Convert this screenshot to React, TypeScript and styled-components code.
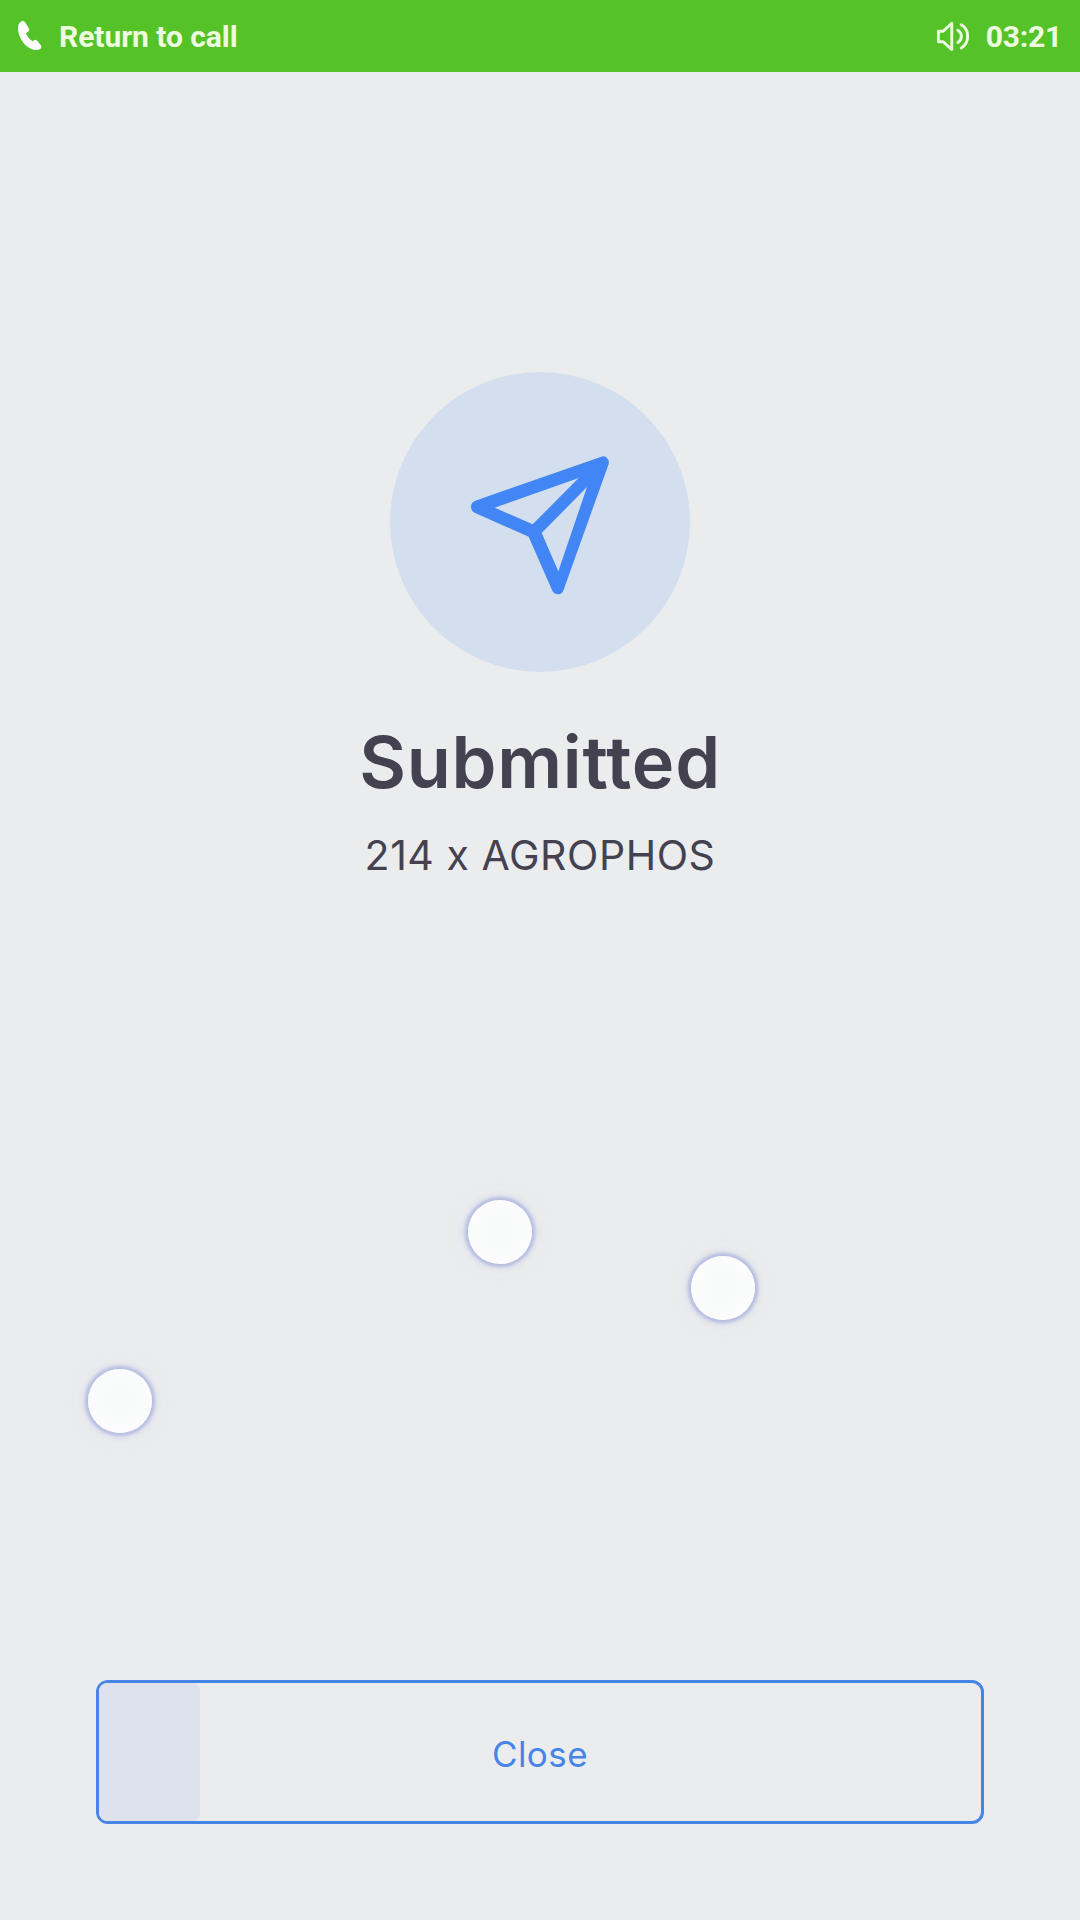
import React from "react";
import styled, { createGlobalStyle } from "styled-components";

const GlobalStyle = createGlobalStyle`
  * { box-sizing: border-box; }
  html, body { margin: 0; background: #ebecee; }
`;

const Screen = styled.main`
  position: relative;
  display: flex;
  flex-direction: column;
  width: 1080px;
  height: 1920px;
  overflow: hidden;
  background: #ebecee;
  font-family: Inter, "Liberation Sans", sans-serif;
  color: #444250;
`;

const CallBar = styled.header`
  display: flex;
  align-items: center;
  height: 72px;
  padding: 0 18px 0 17px;
  background: #55c327;
  color: #edfce0;
  font: 700 30px/36px Roboto, sans-serif;
`;

const CallLabel = styled.span`
  flex: 1;
  margin-left: 16px;
  padding-top: 1px;
  letter-spacing: -0.05px;
`;

const CallTime = styled.time`
  margin-left: 15px;
  padding-top: 1px;
  letter-spacing: -0.2px;
`;

const Result = styled.section`
  display: flex;
  flex: 1;
  flex-direction: column;
  align-items: center;
  padding-top: 300px;
`;

const Badge = styled.div`
  display: flex;
  align-items: center;
  justify-content: center;
  width: 300px;
  height: 300px;
  border-radius: 50%;
  background: #d3dfee;
`;

const Title = styled.h1`
  margin: 46px 0 0;
  font-size: 72px;
  line-height: 88px;
  font-weight: 600;
  letter-spacing: 0.75px;
`;

const Summary = styled.p`
  margin: 25px 0 0;
  font-size: 41px;
  line-height: 48px;
  font-weight: 400;
  letter-spacing: 0.55px;
`;

const Footer = styled.footer`
  display: flex;
  padding: 0 96px 96px;
`;

const CloseButton = styled.button`
  position: relative;
  flex: 1;
  height: 144px;
  padding: 4px 0 0;
  border: 3px solid #4685e6;
  border-radius: 12px;
  background: transparent;
  color: #4685e6;
  font: 400 35px/44px Inter, sans-serif;
  letter-spacing: 0.45px;
`;

const Progress = styled.span`
  position: absolute;
  inset: 0 auto 0 0;
  width: 101px;
  border-radius: 8px;
  background: #dee2ed;
`;

const Touch = styled.span<{ $x: number; $y: number }>`
  position: absolute;
  left: ${(p) => p.$x - 32}px;
  top: ${(p) => p.$y - 32}px;
  width: 64px;
  height: 64px;
  border-radius: 50%;
  background: radial-gradient(circle, #f8f9f9 0%, #fafbfb 45%, #fcfcfe 70%);
  box-shadow: 0 0 3px 3px #b8bfe1, 0 0 7px 4px rgba(190, 198, 228, 0.6),
    0 0 16px 4px rgba(245, 246, 248, 0.5);
`;

const PhoneIcon = () => (
  <svg width="26" height="32" viewBox="50 60 78 96">
    <path
      fill="#fff"
      d="M58 68C63 63 69 61 73 65C78 72 83 81 86 86C88 90 87 92 83 95L77 100C82 112 88 119 97 124L101 121C104 119 106 119 109 121L121 135C124 139 124 143 120 147C113 151 101 151 93 147C74 139 59 119 54 96C52 84 53 73 58 68Z"
    />
  </svg>
);

const SpeakerIcon = () => (
  <svg width="36" height="34" viewBox="0 0 36 34" fill="none" stroke="#edfce0" strokeWidth="2.9">
    <path strokeLinejoin="round" d="M3.4 12.2H8.2L16.8 4.2V30.6L8.2 22.8H3.4Z" />
    <path strokeLinecap="round" d="M22.8 11.2C27.5 14.1 27.5 20.7 22.8 23.6M26.2 5.8C34.8 10.5 34.8 24 26.2 29" />
  </svg>
);

const PlaneIcon = () => (
  <svg width="300" height="300" viewBox="30 36 900 900">
    <path
      fill="#4285f4"
      fillRule="evenodd"
      d="M664 290Q673 287 680 293Q689 301 686 312L551 689Q546 703 534 703Q522 703 516 690L446 530L287 460Q273 454 273 440Q273 427 286 422ZM596 354L344 443L458 493ZM621 381L485 519L535 634Z"
    />
  </svg>
);

const touches = [
  { x: 500.3, y: 1232 },
  { x: 723.3, y: 1288 },
  { x: 120.3, y: 1401.3 },
];

export default function App() {
  return (
    <>
      <GlobalStyle />
      <Screen>
        <CallBar>
          <PhoneIcon />
          <CallLabel>Return to call</CallLabel>
          <SpeakerIcon />
          <CallTime>03:21</CallTime>
        </CallBar>
        <Result>
          <Badge>
            <PlaneIcon />
          </Badge>
          <Title>Submitted</Title>
          <Summary>214 x AGROPHOS</Summary>
        </Result>
        <Footer>
          <CloseButton>
            <Progress />
            Close
          </CloseButton>
        </Footer>
        {touches.map((t) => (
          <Touch key={t.x} $x={t.x} $y={t.y} />
        ))}
      </Screen>
    </>
  );
}
